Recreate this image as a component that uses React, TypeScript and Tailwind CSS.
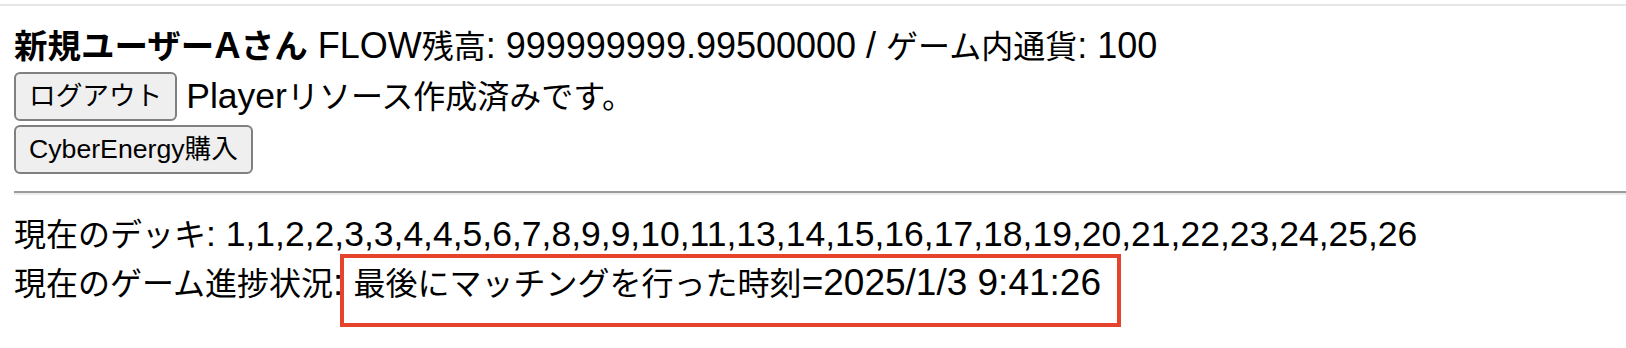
import React from "react";

const font = { fontFamily: '"Liberation Sans", "Noto Sans CJK JP", sans-serif' };

const CJK = /([\u3000-\u30ff\u4e00-\u9fff\uff00-\uffef]+)/;

function T({ s, cjk = "text-[32px]", lat = "text-[35.5px]" }: { s: string; cjk?: string; lat?: string }) {
  const parts = s.split(CJK).filter((p) => p.length > 0);
  return (
    <>
      {parts.map((p, i) => (
        <span key={i} className={CJK.test(p) ? cjk : lat}>
          {p}
        </span>
      ))}
    </>
  );
}

function Btn({ children }: { children: React.ReactNode }) {
  return (
    <button className="h-[49px] px-[13px] border-2 border-[#808080] rounded-[6px] bg-[#efefef] text-[26.67px] leading-none text-black">
      {children}
    </button>
  );
}

export default function App() {
  return (
    <div className="w-[1626px] h-[348px] bg-white text-black overflow-hidden" style={font}>
      <div className="pt-[4px]">
        <div className="h-[2px] bg-[#e6e6e6]" />
      </div>
      <div className="pl-[14px] text-[32px]">
        <div className="mt-[17px] leading-[46px] whitespace-nowrap">
          <span className="font-bold">
            <T s="新規ユーザーAさん" cjk="text-[33.5px]" lat="text-[36.5px]" />
          </span>
          <T s=" FLOW残高: 999999999.99500000 / ゲーム内通貨: 100" lat="text-[36px]" />
        </div>
        <div className="mt-[2px] flex items-center gap-[9px] whitespace-nowrap">
          <Btn>ログアウト</Btn>
          <span className="leading-[46px]">
            <T s="Playerリソース作成済みです。" />
          </span>
        </div>
        <div className="mt-[4px] flex">
          <Btn>CyberEnergy購入</Btn>
        </div>
        <div className="mt-[17px] border-t-2 border-b-2 border-t-[#9a9a9a] border-b-[#eeeeee]" />
        <div className="mt-[16px] leading-[47px] whitespace-nowrap">
          <T s="現在のデッキ: 1,1,2,2,3,3,4,4,5,6,7,8,9,9,10,11,13,14,15,16,17,18,19,20,21,22,23,24,25,26" />
        </div>
        <div className="relative leading-[47px] whitespace-nowrap">
          <T s="現在のゲーム進捗状況: 最後にマッチングを行った時刻=2025/1/3 9:41:26" lat="text-[37px]" />
          <div className="absolute left-[326px] top-[-5px] w-[781px] h-[73px] border-4 border-[#e5432b]" />
        </div>
      </div>
    </div>
  );
}
